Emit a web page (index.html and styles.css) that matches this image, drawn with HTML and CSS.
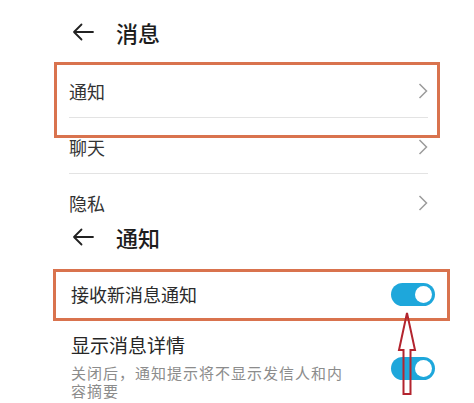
FILE: index.html
```html
<!DOCTYPE html>
<html lang="zh-CN">
<head>
<meta charset="utf-8">
<link rel="stylesheet" href="styles.css">
</head>
<body>
<div class="screen">
  <div class="header header-first">
    <svg class="back" width="22" height="18" viewBox="0 0 22 18"><path d="M21 9H2M9.5 1.5L2 9l7.5 7.5" fill="none" stroke="#222" stroke-width="1.8" stroke-linecap="round" stroke-linejoin="round"/></svg>
    <span class="title">消息</span>
  </div>
  <div class="list">
    <div class="row divided"><span>通知</span><svg class="chev" width="10" height="16" viewBox="0 0 10 16"><path d="M1.5 1l7 7-7 7" fill="none" stroke="#9c9c9c" stroke-width="1.5"/></svg></div>
    <div class="row divided"><span>聊天</span><svg class="chev" width="10" height="16" viewBox="0 0 10 16"><path d="M1.5 1l7 7-7 7" fill="none" stroke="#9c9c9c" stroke-width="1.5"/></svg></div>
    <div class="row last"><span>隐私</span><svg class="chev" width="10" height="16" viewBox="0 0 10 16"><path d="M1.5 1l7 7-7 7" fill="none" stroke="#9c9c9c" stroke-width="1.5"/></svg></div>
  </div>
  <div class="header header-second">
    <svg class="back" width="22" height="18" viewBox="0 0 22 18"><path d="M21 9H2M9.5 1.5L2 9l7.5 7.5" fill="none" stroke="#222" stroke-width="1.8" stroke-linecap="round" stroke-linejoin="round"/></svg>
    <span class="title">通知</span>
  </div>
  <div class="settings">
    <div class="setting receive">
      <span class="label">接收新消息通知</span>
      <span class="toggle"><span class="knob"></span></span>
    </div>
    <div class="setting detail">
      <div class="texts">
        <div class="label big">显示消息详情</div>
        <div class="desc">关闭后，通知提示将不显示发信人和内容摘要</div>
      </div>
      <span class="toggle"><span class="knob"></span></span>
    </div>
  </div>

  <div class="mark mark-one"></div>
  <div class="mark mark-two"></div>
  <svg class="pointer" width="24" height="84" viewBox="0 0 24 84"><path d="M12 1L4 38h4.5v44h7V38H20Z" fill="none" stroke="#b3242e" stroke-width="2" stroke-linejoin="miter"/></svg>
</div>
</body>
</html>
```

FILE: styles.css
```css
* { box-sizing: border-box; }
html, body { margin: 0; padding: 0; background: #fff; }
body {
  font-family: "Noto Sans CJK SC", "Noto Sans", sans-serif;
  color: #2b2b2b;
}
.screen {
  position: relative;
  width: 474px;
  height: 403px;
  overflow: hidden;
}
.header {
  display: flex;
  align-items: center;
  padding-left: 72px;
  gap: 22px;
}
.header-first { padding-top: 19px; padding-bottom: 17px; }
.header-second { padding-top: 9px; }
.header .title {
  font-size: 22px;
  line-height: 26px;
  font-weight: 500;
  color: #1d1d1d;
}
.back { display: block; }
.list {
  padding-left: 69px;
  padding-right: 46px;
}
.row {
  display: flex;
  align-items: center;
  justify-content: space-between;
  padding-top: 17px;
  padding-bottom: 14px;
  font-size: 18px;
  line-height: 24px;
  color: #333;
}
.row.divided { border-bottom: 1px solid #e3e3e3; }
.row.last { padding-bottom: 0; }
.chev { display: block; }
.settings {
  padding-left: 71px;
  padding-right: 39px;
}
.setting {
  display: flex;
  justify-content: space-between;
  align-items: center;
}
.receive { padding-top: 32px; }
.receive .label { font-size: 18px; line-height: 24px; color: #2b2b2b; }
.detail { padding-top: 26px; align-items: flex-start; }
.detail .toggle { margin-top: 25px; }
.label.big { font-size: 19px; line-height: 26px; color: #262626; }
.desc {
  width: 280px;
  margin-top: 6px;
  font-size: 15px;
  line-height: 18px;
  letter-spacing: 1px;
  color: #8c8c8c;
}
.toggle {
  display: flex;
  justify-content: flex-end;
  align-items: center;
  width: 44px;
  height: 23px;
  padding: 3px;
  border-radius: 12px;
  background: #1ea7db;
}
.knob {
  width: 17px;
  height: 17px;
  border-radius: 50%;
  background: #fff;
}
.mark {
  position: absolute;
  border: 3.5px solid #d9734e;
}
.mark-one { left: 54px; top: 62px; width: 386px; height: 76px; }
.mark-two { left: 53px; top: 269px; width: 397px; height: 52px; }
.pointer { position: absolute; left: 395px; top: 312px; }
```
